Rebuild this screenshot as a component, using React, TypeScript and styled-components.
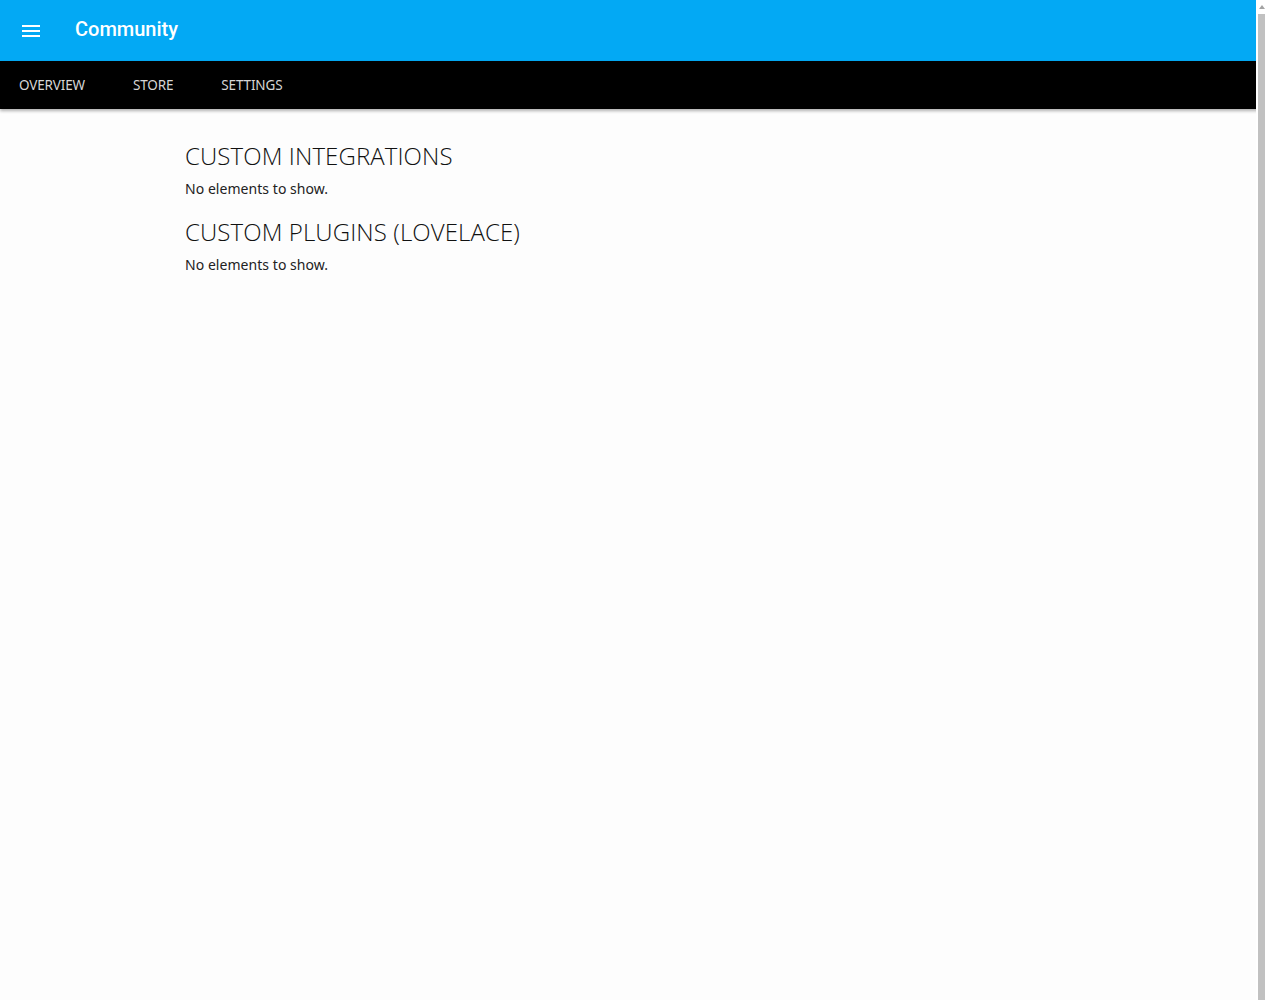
import React from "react";
import styled, { createGlobalStyle } from "styled-components";

const GlobalStyle = createGlobalStyle`
  body {
    margin: 0;
    background: #fdfdfd;
    font-family: "Noto Sans", "Open Sans", sans-serif;
  }
`;

const Page = styled.div`
  min-height: 1000px;
  display: flex;
  flex-direction: column;
`;

const Toolbar = styled.header`
  height: 61px;
  background: #03a9f4;
  display: flex;
  align-items: center;
  padding-left: 19px;
  gap: 32px;
  color: #ffffff;
`;

const MenuButton = styled.button`
  width: 24px;
  height: 24px;
  padding: 0;
  border: 0;
  background: none;
  color: inherit;
  display: flex;
  align-items: center;
  justify-content: center;
`;

const Title = styled.div`
  font-family: Roboto, "Noto Sans", sans-serif;
  font-size: 20px;
  font-weight: 500;
  margin-top: -3px;
`;

const TabBar = styled.nav`
  height: 48px;
  background: #000000;
  display: flex;
  align-items: center;
  padding-left: 19px;
  gap: 48px;
  box-shadow: 0 2px 3px rgba(0, 0, 0, 0.3);
  position: relative;
`;

const Tab = styled.div`
  font-size: 13.5px;
  color: #d6d6d6;
  letter-spacing: -0.15px;
  margin-top: -1px;
`;

const Content = styled.main`
  padding: 29px 0 0 185px;
`;

const Section = styled.section`
  margin-bottom: 15px;
`;

const Heading = styled.h2`
  margin: 0;
  font-family: "Open Sans", "Noto Sans", sans-serif;
  font-size: 24px;
  font-weight: 340;
  color: #111111;
  line-height: 36px;
  letter-spacing: 0.1px;
`;

const Empty = styled.p`
  margin: 5px 0 0;
  font-size: 14px;
  color: #222222;
  line-height: 20px;
  letter-spacing: 0.05px;
`;

/* the window's own scrollbar at the right edge of the screenshot */
const ScrollRail = styled.div`
  position: fixed;
  top: 0;
  right: 0;
  bottom: 0;
  width: 9px;
  box-sizing: border-box;
  background: #ffffff;
  padding-left: 2px;
  display: flex;
  flex-direction: column;
`;

const ScrollArrow = styled.div`
  height: 14px;
  display: flex;
  align-items: center;
  justify-content: center;
  &::after {
    content: "";
    border-left: 3px solid transparent;
    border-right: 3px solid transparent;
    border-bottom: 4px solid #a3a3a3;
  }
`;

const ScrollThumb = styled.div`
  flex: 1;
  background: #c1c1c1;
`;

function MenuIcon() {
  return (
    <svg width="24" height="24" viewBox="0 0 24 24" fill="currentColor">
      <path d="M3 6h18v2H3zM3 11h18v2H3zM3 16h18v2H3z" />
    </svg>
  );
}

const tabs = ["OVERVIEW", "STORE", "SETTINGS"];
const sections = ["CUSTOM INTEGRATIONS", "CUSTOM PLUGINS (LOVELACE)"];

export default function App() {
  return (
    <>
      <GlobalStyle />
      <Page>
        <Toolbar>
          <MenuButton>
            <MenuIcon />
          </MenuButton>
          <Title>Community</Title>
        </Toolbar>
        <TabBar>
          {tabs.map((t) => (
            <Tab key={t}>{t}</Tab>
          ))}
        </TabBar>
        <Content>
          {sections.map((s) => (
            <Section key={s}>
              <Heading>{s}</Heading>
              <Empty>No elements to show.</Empty>
            </Section>
          ))}
        </Content>
      </Page>
      <ScrollRail>
        <ScrollArrow />
        <ScrollThumb />
      </ScrollRail>
    </>
  );
}
